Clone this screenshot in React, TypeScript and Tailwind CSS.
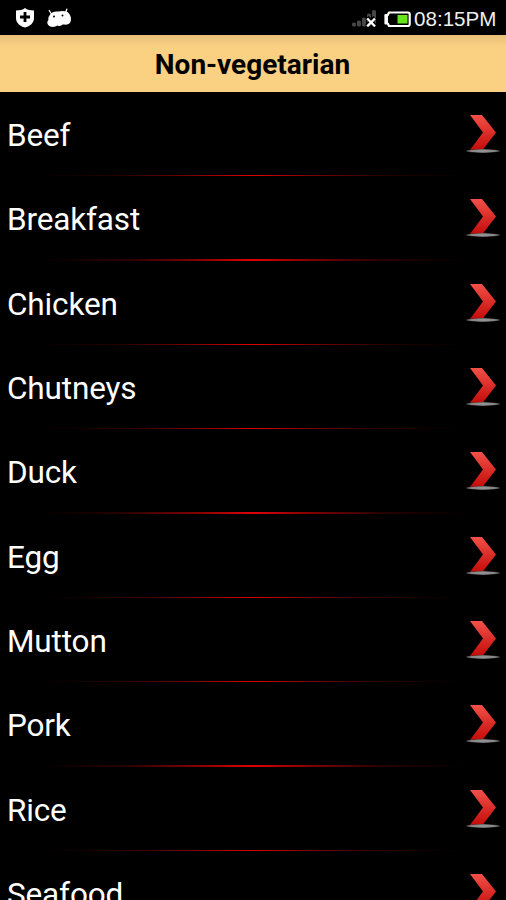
const categories = [
  'Beef',
  'Breakfast',
  'Chicken',
  'Chutneys',
  'Duck',
  'Egg',
  'Mutton',
  'Pork',
  'Rice',
  'Seafood',
];

function ShieldIcon() {
  return (
    <svg className="w-5 h-5" viewBox="0 0 20 20">
      <path fill="#fff" d="M10 0C8 1.800 4.500 2.500 1 2.500V10C1 15 5 18.200 10 19.500C15 18.200 19 15 19 10V2.500C15.500 2.500 12 1.800 10 0Z" />
      <path stroke="#000" strokeWidth={2.800} d="M10 4V14M5 9H15" />
    </svg>
  );
}

function DroidIcon() {
  return (
    <svg className="w-6 h-5" viewBox="0 0 24 20">
      <path stroke="#fff" strokeWidth={1.300} strokeLinecap="round" d="M2.200 2.500L4.500 6M19.800 1.200L18.500 5" />
      <path fill="#fff" d="M2.500 7.500C4 4 8 3 11.500 3.600C15 2.600 20 2.700 22 5.500C25 9.500 24.500 15 21 16.300C19 17 17 16.400 15.500 16.600C14 18.500 12 18.200 10.500 17.500C8 19.400 3 19.600 1.200 17C-.3 14.800 .3 13 1.600 12C.8 10.500 1.500 9 2.500 7.500Z" />
      <circle cx={7} cy={8.500} r={1} fill="#000" />
      <circle cx={15.500} cy={7.500} r={1} fill="#000" />
    </svg>
  );
}

function SignalIcon() {
  return (
    <svg className="w-6 h-[18px]" viewBox="0 0 24 18">
      <g fill="#464646">
        <rect x={0} y={13.500} width={4} height={4} rx={1.500} />
        <rect x={5} y={11.500} width={4} height={6} rx={1.500} />
        <rect x={10} y={8.500} width={4} height={9} rx={1.500} />
        <rect x={15} y={4.500} width={4} height={13} rx={1.500} />
        <rect x={20} y={1} width={4} height={16.500} rx={1.500} />
      </g>
      <path stroke="#000" strokeWidth={4.500} d="M15 8.500L23 17M23 8.500L15 17" />
      <path stroke="#fff" strokeWidth={2.400} d="M15.200 9.500L23 17.300M23 9.500L15.200 17.300" />
    </svg>
  );
}

function BatteryIcon() {
  return (
    <svg className="w-[27px] h-4" viewBox="0 0 27 16">
      <path fill="none" stroke="#fff" strokeWidth={2.200} strokeLinejoin="round" d="M5 1.500H24Q25.700 1.500 25.700 3.200V13.300Q25.700 15 24 15H5L3.800 12.500H1.500V4H3.800Z" />
      <path fill="#fff" d="M1 4H4V12.500H1Z" />
      <rect x={13.500} y={4} width={10} height={8.500} fill="#66e61a" />
    </svg>
  );
}

function StatusBar() {
  return (
    <header className="flex h-[35px] shrink-0 items-center justify-between pl-[15px] pr-[9px]">
      <div className="flex items-center gap-3">
        <ShieldIcon />
        <DroidIcon />
      </div>
      <div className="flex items-center">
        <SignalIcon />
        <div className="ml-2 pt-0.5">
          <BatteryIcon />
        </div>
        <span className="ml-[3px] w-[83px] pt-[3px] font-['Liberation_Sans',sans-serif] text-[20.6px] leading-8 text-[#eee]">
          08:15PM
        </span>
      </div>
    </header>
  );
}

function Chevron() {
  return (
    <svg className="-mt-px h-10 w-9" viewBox="0 0 36 40">
      <defs>
        <linearGradient id="chevron" x1="0" y1="0" x2="0" y2="1">
          <stop offset="0" stopColor="#f25048" />
          <stop offset="1" stopColor="#c40c0a" />
        </linearGradient>
        <radialGradient id="shadow">
          <stop offset="0" stopColor="#999" />
          <stop offset="0.7" stopColor="#858585" />
          <stop offset="1" stopColor="#333" />
        </radialGradient>
      </defs>
      <path fill="url(#chevron)" d="M5 2H17L31 19.500L17.500 37H5L18 19.500Z" />
      <ellipse cx={18} cy={38} rx={17.200} ry={1.900} fill="url(#shadow)" />
    </svg>
  );
}

function CategoryRow({ name }: { name: string }) {
  return (
    <li className="flex h-[84.35px] shrink-0 flex-col">
      <div className="flex flex-1 items-center justify-between pl-[7px] pr-[5px]">
        <span className="pt-[5px] text-[31.5px] leading-10 tracking-[-0.15px] text-white">{name}</span>
        <Chevron />
      </div>
      <div className="mx-10 h-[1.5px] bg-[linear-gradient(90deg,transparent,#2a0000_20%,#850000_37%,#e00000_50%,#850000_63%,#2a0000_80%,transparent)]" />
    </li>
  );
}

export default function App() {
  return (
    <div className="flex h-[900px] w-[506px] flex-col overflow-hidden bg-black font-[Roboto,sans-serif]">
      <StatusBar />
      <div className="flex h-[57px] shrink-0 items-center justify-center bg-linear-to-b from-[#e8bf78] to-[#fad083] to-20% pt-0.5 pr-px text-[28px] font-bold text-black">
        <h1>Non-vegetarian</h1>
      </div>
      <ul className="flex min-h-0 flex-1 flex-col overflow-hidden">
        {categories.map((name) => (
          <CategoryRow key={name} name={name} />
        ))}
      </ul>
    </div>
  );
}
